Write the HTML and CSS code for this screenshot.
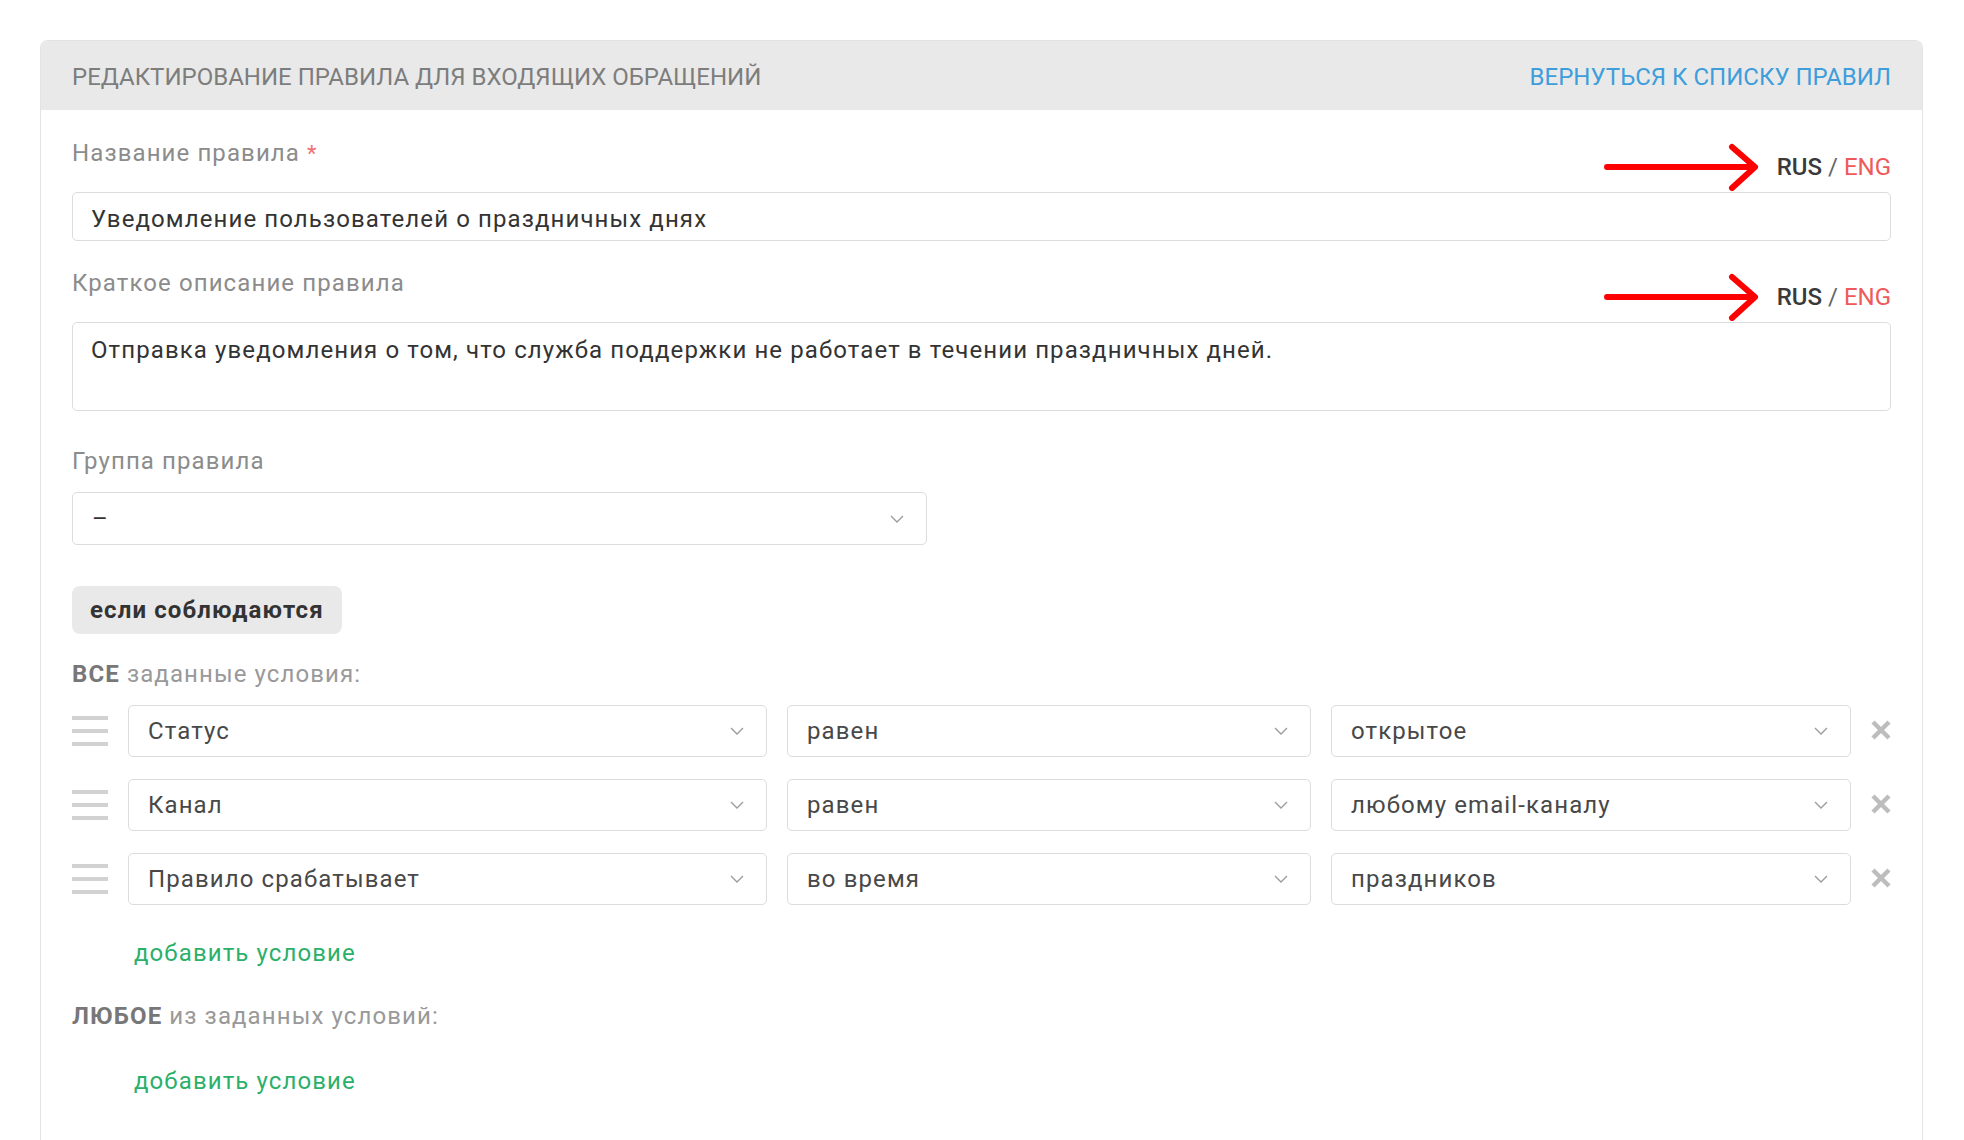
FILE: index.html
```html
<!DOCTYPE html>
<html lang="ru">
<head>
<meta charset="utf-8">
<title>Редактирование правила</title>
<link rel="stylesheet" href="styles.css">
</head>
<body>
<div class="card">
  <div class="card-header">
    <span class="card-title">Редактирование правила для входящих обращений</span>
    <a class="back-link" href="#">Вернуться к списку правил</a>
  </div>

  <div class="card-body">
    <div class="field field-name">
      <div class="field-head">
        <span class="field-label">Название правила <span class="req">*</span></span>
        <div class="lang-switch">
          <svg class="pointer" width="160" height="48" viewBox="0 0 160 48">
            <path d="M3 24 H150 M128 4 L151 24 L128 45" fill="none" stroke="#ff0000" stroke-width="6" stroke-linecap="round" stroke-linejoin="round"/>
          </svg>
          <span class="lang-active">RUS</span><span class="lang-sep">/</span><span class="lang-alt">ENG</span>
        </div>
      </div>
      <input class="text-input" type="text" value="Уведомление пользователей о праздничных днях">
    </div>

    <div class="field field-desc">
      <div class="field-head">
        <span class="field-label">Краткое описание правила</span>
        <div class="lang-switch">
          <svg class="pointer" width="160" height="48" viewBox="0 0 160 48">
            <path d="M3 24 H150 M128 4 L151 24 L128 45" fill="none" stroke="#ff0000" stroke-width="6" stroke-linecap="round" stroke-linejoin="round"/>
          </svg>
          <span class="lang-active">RUS</span><span class="lang-sep">/</span><span class="lang-alt">ENG</span>
        </div>
      </div>
      <textarea class="text-area">Отправка уведомления о том, что служба поддержки не работает в течении праздничных дней.</textarea>
    </div>

    <div class="field field-group">
      <span class="field-label">Группа правила</span>
      <div class="select select-group">
        <span class="select-value">–</span>
        <svg class="chevron" width="14" height="8" viewBox="0 0 14 8"><path d="M1 1 L7 7 L13 1" fill="none" stroke="#9a9a9a" stroke-width="1.3"/></svg>
      </div>
    </div>

    <span class="match-toggle">если соблюдаются</span>

    <p class="cond-title"><b>ВСЕ</b> заданные условия:</p>

    <div class="cond-list">
      <div class="cond-row">
        <span class="drag-handle"><i></i><i></i><i></i></span>
        <div class="select"><span class="select-value">Статус</span><svg class="chevron" width="14" height="8" viewBox="0 0 14 8"><path d="M1 1 L7 7 L13 1" fill="none" stroke="#9a9a9a" stroke-width="1.3"/></svg></div>
        <div class="select"><span class="select-value">равен</span><svg class="chevron" width="14" height="8" viewBox="0 0 14 8"><path d="M1 1 L7 7 L13 1" fill="none" stroke="#9a9a9a" stroke-width="1.3"/></svg></div>
        <div class="select"><span class="select-value">открытое</span><svg class="chevron" width="14" height="8" viewBox="0 0 14 8"><path d="M1 1 L7 7 L13 1" fill="none" stroke="#9a9a9a" stroke-width="1.3"/></svg></div>
        <svg class="remove" width="20" height="20" viewBox="0 0 20 20"><path d="M2 2 L18 18 M18 2 L2 18" stroke="#bdbdbd" stroke-width="4.5"/></svg>
      </div>
      <div class="cond-row">
        <span class="drag-handle"><i></i><i></i><i></i></span>
        <div class="select"><span class="select-value">Канал</span><svg class="chevron" width="14" height="8" viewBox="0 0 14 8"><path d="M1 1 L7 7 L13 1" fill="none" stroke="#9a9a9a" stroke-width="1.3"/></svg></div>
        <div class="select"><span class="select-value">равен</span><svg class="chevron" width="14" height="8" viewBox="0 0 14 8"><path d="M1 1 L7 7 L13 1" fill="none" stroke="#9a9a9a" stroke-width="1.3"/></svg></div>
        <div class="select"><span class="select-value">любому email-каналу</span><svg class="chevron" width="14" height="8" viewBox="0 0 14 8"><path d="M1 1 L7 7 L13 1" fill="none" stroke="#9a9a9a" stroke-width="1.3"/></svg></div>
        <svg class="remove" width="20" height="20" viewBox="0 0 20 20"><path d="M2 2 L18 18 M18 2 L2 18" stroke="#bdbdbd" stroke-width="4.5"/></svg>
      </div>
      <div class="cond-row">
        <span class="drag-handle"><i></i><i></i><i></i></span>
        <div class="select"><span class="select-value">Правило срабатывает</span><svg class="chevron" width="14" height="8" viewBox="0 0 14 8"><path d="M1 1 L7 7 L13 1" fill="none" stroke="#9a9a9a" stroke-width="1.3"/></svg></div>
        <div class="select"><span class="select-value">во время</span><svg class="chevron" width="14" height="8" viewBox="0 0 14 8"><path d="M1 1 L7 7 L13 1" fill="none" stroke="#9a9a9a" stroke-width="1.3"/></svg></div>
        <div class="select"><span class="select-value">праздников</span><svg class="chevron" width="14" height="8" viewBox="0 0 14 8"><path d="M1 1 L7 7 L13 1" fill="none" stroke="#9a9a9a" stroke-width="1.3"/></svg></div>
        <svg class="remove" width="20" height="20" viewBox="0 0 20 20"><path d="M2 2 L18 18 M18 2 L2 18" stroke="#bdbdbd" stroke-width="4.5"/></svg>
      </div>
    </div>

    <a class="add-cond" href="#">добавить условие</a>

    <p class="cond-title cond-any"><b>ЛЮБОЕ</b> из заданных условий:</p>

    <a class="add-cond" href="#">добавить условие</a>
  </div>
</div>
</body>
</html>
```

FILE: styles.css
```css
* {
  box-sizing: border-box;
}

body {
  margin: 0;
  padding: 40px 41px 0 40px;
  background: #ffffff;
  font-family: Roboto, "Noto Sans", Arial, sans-serif;
  font-size: 24px;
  line-height: 30px;
  letter-spacing: 1.1px;
  color: #333333;
}

/* Card */
.card {
  border: 1px solid #e3e3e3;
  border-bottom: none;
  border-radius: 8px 8px 0 0;
  min-height: 1140px;
}

.card-header {
  height: 69px;
  padding: 2px 31px 0;
  display: flex;
  align-items: center;
  justify-content: space-between;
  background: #e9e9e9;
  border-radius: 7px 7px 0 0;
  letter-spacing: 0;
}

.card-title {
  text-transform: uppercase;
  color: #7d7d7d;
}

.back-link {
  text-transform: uppercase;
  color: #3d9edb;
  text-decoration: none;
}

.card-body {
  padding: 28px 31px 0 31px;
}

/* Fields */
.field-name {
  margin-bottom: 27px;
}

.field-desc {
  margin-bottom: 35px;
}

.field-group {
  margin-bottom: 41px;
}

.field-head {
  height: 44px;
  margin-bottom: 10px;
  display: flex;
  justify-content: space-between;
}

.field-label {
  display: block;
  align-self: flex-start;
  color: #8c8c8c;
}

.req {
  color: #f07070;
  font-size: 22px;
}

.lang-switch {
  align-self: flex-end;
  height: 30px;
  display: flex;
  align-items: center;
  letter-spacing: 0;
}

.pointer {
  margin: -9px 13px -9px 0;
}

.lang-active {
  font-weight: 500;
  color: #3a3a3a;
}

.lang-sep {
  margin: 0 6px;
  color: #666666;
}

.lang-alt {
  color: #ee5a5a;
}

.text-input,
.text-area {
  display: block;
  width: 100%;
  margin: 0;
  border: 1px solid #dcdcdc;
  border-radius: 5px;
  background: #ffffff;
  font: inherit;
  letter-spacing: inherit;
  color: #333333;
  outline: none;
}

.text-input {
  height: 49px;
  padding: 4px 18px 0;
}

.text-area {
  height: 89px;
  padding: 12px 18px;
  resize: none;
}

.field-group .field-label {
  margin-bottom: 16px;
}

/* Select boxes */
.select {
  height: 52px;
  padding: 0 22px 0 19px;
  display: flex;
  align-items: center;
  justify-content: space-between;
  border: 1px solid #dcdcdc;
  border-radius: 5px;
  background: #ffffff;
  color: #484848;
}

.select-group {
  width: 855px;
  height: 53px;
  color: #333333;
}

.chevron {
  flex: none;
}

/* Match mode toggle */
.match-toggle {
  display: inline-flex;
  align-items: center;
  height: 48px;
  padding: 0 18px;
  background: #e9e9e9;
  border-radius: 8px;
  font-weight: 700;
  color: #333333;
}

.cond-title {
  margin: 25px 0 16px;
  color: #999999;
}

.cond-title b {
  color: #777777;
}

.cond-any {
  margin: 33px 0 35px;
}

/* Condition rows */
.cond-list {
  display: flex;
  flex-direction: column;
  gap: 22px;
}

.cond-row {
  display: grid;
  grid-template-columns: 36px 639fr 524fr 520fr 20px;
  column-gap: 20px;
  align-items: center;
}

.drag-handle {
  display: flex;
  flex-direction: column;
  gap: 9px;
}

.drag-handle i {
  display: block;
  height: 4px;
  background: #d2d2d2;
}

.remove {
  display: block;
  margin-top: -3px;
}

.add-cond {
  display: block;
  width: max-content;
  margin: 33px 0 0 62px;
  color: #2bb06a;
  text-decoration: none;
}
```
